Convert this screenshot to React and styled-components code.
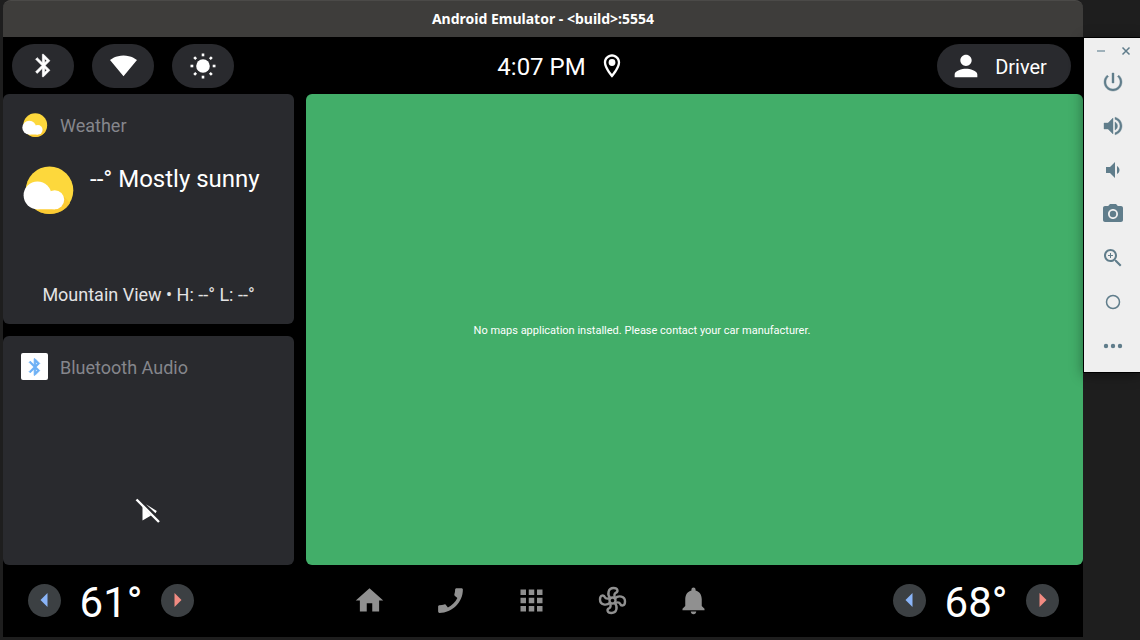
import React from 'react';
import styled, { createGlobalStyle } from 'styled-components';

const GlobalStyle = createGlobalStyle`
  *, *::before, *::after { box-sizing: border-box; }
  body { margin: 0; background: #1e1e1e; font-family: Roboto, "Liberation Sans", sans-serif; }
  h1, h2, p { margin: 0; font-weight: 400; }
  button { border: 0; padding: 0; font: inherit; color: inherit; cursor: pointer; }
  svg { display: block; flex: none; }
`;

const Desktop = styled.div`
  display: flex;
  align-items: flex-start;
  min-height: 100vh;
  padding: 0 0 3px 3px;
  background: #1e1e1e;
`;

const EmulatorWindow = styled.section`
  flex: 1;
  min-width: 0;
  min-height: calc(100vh - 3px);
  display: flex;
  flex-direction: column;
`;

const TitleBar = styled.header`
  height: 37px;
  display: flex;
  align-items: center;
  justify-content: center;
  background: #3e3d3b;
  border-top: 1px solid #4b4a48;
  border-radius: 8px 8px 0 0;
  color: #fff;
`;

const WindowTitle = styled.h1`
  font-family: "Noto Sans", "Open Sans", sans-serif;
  font-size: 14px;
  font-weight: 700;
  line-height: 20px;
`;

const Screen = styled.main`
  flex: 1;
  display: flex;
  flex-direction: column;
  background: #000;
  color: #fff;
`;

const StatusBar = styled.div`
  display: grid;
  grid-template-columns: 1fr auto 1fr;
  align-items: center;
  height: 57px;
  padding: 0 12px 0 9px;
`;

const QuickControls = styled.div`
  display: flex;
  gap: 18px;
`;

const Pill = styled.button`
  display: flex;
  align-items: center;
  justify-content: center;
  width: ${(p) => (p.$wide ? '134px' : '62px')};
  height: 44px;
  padding-right: ${(p) => (p.$wide ? '12px' : '0')};
  gap: 12px;
  border-radius: 22px;
  background: #292a2e;
  justify-self: end;
  font-size: 20px;
  line-height: 24px;
`;

const StatusLabel = styled.span`
  padding-top: 2px;
`;

const Clock = styled.div`
  display: flex;
  align-items: center;
  gap: 12px;
  padding-left: 40px;
  font-size: 24px;
  line-height: 28px;
`;

const Dashboard = styled.div`
  flex: 1;
  display: grid;
  grid-template-columns: 291px 1fr;
  gap: 12px;
`;

const CardColumn = styled.div`
  display: grid;
  grid-template-rows: 1fr 1fr;
  gap: 12px;
`;

const Card = styled.section`
  display: flex;
  flex-direction: column;
  padding: 17px 18px;
  border-radius: 6px;
  background: #292a2e;
`;

const CardHeader = styled.div`
  display: flex;
  align-items: center;
  gap: 12px;
  height: 28px;
`;

const CardTitle = styled.h2`
  padding-top: 2px;
  font-size: 18px;
  line-height: 28px;
  color: #85868c;
`;

const AppBadge = styled.span`
  display: flex;
  align-items: center;
  justify-content: center;
  width: 27px;
  height: 27px;
  border-radius: 2px;
  background: #fff;
`;

const Forecast = styled.div`
  display: flex;
  gap: 15px;
  padding-top: 25px;
`;

const Condition = styled.p`
  font-size: 24px;
  line-height: 30px;
`;

const Location = styled.p`
  margin-top: auto;
  text-align: center;
  font-size: 18px;
  line-height: 24px;
  color: #e3e3e4;
`;

const PlaybackArea = styled.div`
  margin-top: auto;
  display: flex;
  justify-content: center;
  padding: 0 2px 24px 0;
`;

const MapPanel = styled.section`
  display: flex;
  align-items: center;
  justify-content: center;
  padding: 2px 105px 0 0;
  border-radius: 6px;
  background: #42ae69;
  font-size: 11px;
  line-height: 16px;
`;

const BottomBar = styled.footer`
  display: flex;
  align-items: center;
  justify-content: space-between;
  height: 72px;
  padding: 0 24px 2px 25px;
`;

const Climate = styled.div`
  display: flex;
  align-items: center;
`;

const Step = styled.button`
  display: flex;
  align-items: center;
  justify-content: center;
  width: 33px;
  height: 33px;
  border-radius: 50%;
  background: #3c4043;
`;

const Temperature = styled.span`
  width: 100px;
  padding-top: 5px;
  text-align: center;
  font-size: 42px;
  line-height: 48px;
`;

const Nav = styled.nav`
  display: flex;
  gap: 48px;
  padding-right: 24px;
`;

const NavButton = styled.button`
  background: none;
  color: #909090;
`;

const Toolbar = styled.aside`
  position: relative;
  width: 57px;
  height: 336px;
  margin-top: 37px;
  border: solid #000;
  border-width: 1px 0 1px 1px;
  background: #efefef;
  color: #607d8b;
  box-shadow: 0 2px 12px rgba(0, 0, 0, 0.4);
`;

const WindowControls = styled.div`
  display: flex;
  justify-content: center;
  gap: 13px;
  padding: 7px 0 0 2px;
`;

const ToolList = styled.div`
  display: flex;
  flex-direction: column;
  align-items: center;
  gap: 20px;
  padding: 13px 0 0 1px;
`;

const ToolButton = styled.button`
  background: none;
`;

const PATHS = {
  bluetooth: 'M17.71 7.71L12 2h-1v7.59L6.41 5 5 6.41 10.59 12 5 17.59 6.41 19 11 14.41V22h1l5.71-5.71-4.3-4.29 4.3-4.29zM13 5.83l1.88 1.88L13 9.59V5.83zm1.88 10.46L13 18.17v-3.76l1.88 1.88z',
  wifi: 'M12 21.5L24 7C23.5 6.700 19 3 12 3S.5 6.700 0 7z',
  person: 'M12 12c2.210 0 4-1.790 4-4s-1.790-4-4-4-4 1.790-4 4 1.790 4 4 4zm0 2c-2.670 0-8 1.340-8 4v2h16v-2c0-2.660-5.330-4-8-4z',
  home: 'M10 20v-6h4v6h5v-8h3L12 3 2 12h3v8z',
  phone: 'M3.990 15.380c1.230 0 2.420-.2 3.530-.560.350-.120.740-.030 1.020.240l1.570 1.970c2.830-1.350 5.480-3.900 6.890-6.830l-1.950-1.660c-.270-.280-.350-.670-.240-1.020.370-1.110.560-2.300.560-3.530 0-.540.450-.990.990-.990h3.450c.540 0 1.190.240 1.190.990C21 13.280 13.270 21 3.990 21c-.710 0-.990-.630-.990-1.180v-3.450c0-.540.450-.990.990-.990z',
  apps: 'M4 4h4v4H4zM10 4h4v4h-4zM16 4h4v4h-4zM4 10h4v4H4zM10 10h4v4h-4zM16 10h4v4h-4zM4 16h4v4H4zM10 16h4v4h-4zM16 16h4v4h-4z',
  bell: 'M12 22c1.100 0 2-.900 2-2h-4c0 1.100.900 2 2 2zm6-6v-5c0-3.070-1.630-5.640-4.500-6.320V4c0-.830-.670-1.500-1.500-1.500s-1.500.670-1.500 1.500v.680C7.640 5.360 6 7.920 6 11v5l-2 2v1h16v-1z',
  power: 'M13 3h-2v10h2V3zm4.830 2.170l-1.420 1.420C17.990 7.860 19 9.810 19 12c0 3.870-3.130 7-7 7s-7-3.130-7-7c0-2.190 1.010-4.140 2.580-5.420L6.170 5.170C4.230 6.820 3 9.260 3 12c0 4.970 4.030 9 9 9s9-4.030 9-9c0-2.740-1.230-5.180-3.170-6.830z',
  volumeUp: 'M3 9v6h4l5 5V4L7 9H3zm13.500 3c0-1.770-1.020-3.290-2.500-4.030v8.050c1.480-.730 2.500-2.250 2.500-4.020zM14 3.230v2.060c2.890.860 5 3.540 5 6.710s-2.110 5.850-5 6.710v2.060c4.010-.910 7-4.490 7-8.770s-2.990-7.860-7-8.770z',
  volumeDown: 'M18.500 12c0-1.770-1.020-3.290-2.500-4.030v8.050c1.480-.730 2.500-2.250 2.500-4.020zM5 9v6h4l5 5V4L9 9H5z',
  camera: 'M9 2L7.170 4H4c-1.100 0-2 .900-2 2v12c0 1.100.900 2 2 2h16c1.100 0 2-.900 2-2V6c0-1.100-.900-2-2-2h-3.170L15 2H9zm3 15c-2.760 0-5-2.240-5-5s2.240-5 5-5 5 2.240 5 5-2.240 5-5 5zm0-1.800a3.200 3.200 0 1 0 0-6.400 3.200 3.200 0 0 0 0 6.400z',
  zoom: 'M15.500 14h-.790l-.280-.270C15.410 12.590 16 11.110 16 9.500 16 5.910 13.090 3 9.500 3S3 5.910 3 9.500 5.910 16 9.500 16c1.610 0 3.090-.590 4.230-1.570l.270.280v.790l5 4.990L20.490 19l-4.990-5zm-6 0C7.010 14 5 11.990 5 9.500S7.010 5 9.500 5 14 7.010 14 9.500 11.990 14 9.500 14zM10 7H9v2H7v1h2v2h1v-2h2V9h-2z',
  more: 'M5 9.800a2.200 2.200 0 1 0 0 4.400 2.200 2.200 0 0 0 0-4.400zM12 9.800a2.200 2.200 0 1 0 0 4.400 2.200 2.200 0 0 0 0-4.400zM19 9.800a2.200 2.200 0 1 0 0 4.400 2.200 2.200 0 0 0 0-4.400z',
};

function Icon({ name, size, color = 'currentColor', weight = 0 }) {
  return (
    <svg
      width={size}
      height={size}
      viewBox="0 0 24 24"
      fill={color}
      stroke={weight ? color : 'none'}
      strokeWidth={weight}
      aria-hidden="true"
    >
      <path d={PATHS[name]} fillRule={name === 'camera' ? 'evenodd' : 'nonzero'} />
    </svg>
  );
}

function SunIcon() {
  return (
    <svg width="26" height="26" viewBox="0 0 26 26" aria-hidden="true">
      <circle cx="13" cy="13" r="6.800" fill="#fff" />
      <g stroke="#fff" strokeWidth="2.600">
        {[0, 45, 90, 135, 180, 225, 270, 315].map((a) => (
          <path key={a} d="M13 .500v2.800" transform={`rotate(${a} 13 13)`} />
        ))}
      </g>
    </svg>
  );
}

function PinIcon() {
  return (
    <svg width="28" height="28" viewBox="0 0 24 24" fill="#fff" aria-hidden="true">
      <path d="M12 2C8.130 2 5 5.130 5 9c0 5.250 7 13 7 13s7-7.750 7-13c0-3.870-3.130-7-7-7zM7 9c0-2.760 2.240-5 5-5s5 2.240 5 5c0 2.880-2.880 7.190-5 9.880C9.920 16.210 7 11.850 7 9z" />
      <circle cx="12" cy="9" r="2.900" />
    </svg>
  );
}

function WeatherIcon({ size }) {
  return (
    <svg width={size} height={size} viewBox="0 0 54 54" aria-hidden="true">
      <circle cx="28.500" cy="26.300" r="23.800" fill="#fdd83c" />
      <path d="M15 45.200C19 49 24 50 29 50 37 50 45 46 49 39L42 31.500 34 45z" fill="#fbc831" opacity=".8" />
      <g fill="#fff">
        <circle cx="16.500" cy="31.300" r="13.900" />
        <circle cx="33.700" cy="35.700" r="9.500" />
        <path d="M16 31h12l6 5v9.200H16z" />
      </g>
    </svg>
  );
}

function FanIcon() {
  return (
    <svg width="33" height="33" viewBox="-16.500 -16.500 33 33" fill="none" stroke="currentColor" strokeWidth="2.400" aria-hidden="true">
      <circle r="3" />
      {[0, 90, 180, 270].map((a) => (
        <path
          key={a}
          d="M-2.200-2.500C-5.500-6-4.500-12.500 1-12.500 5.800-12.500 5.800-8.600 3.200-7.600 1.400-6.800 1.600-5 2.500-2.200"
          transform={`rotate(${a})`}
        />
      ))}
    </svg>
  );
}

function MutedIcon() {
  return (
    <svg width="26" height="26" viewBox="0 0 26 26" aria-hidden="true">
      <path d="M7.500 8.500V22.500L16 17.500zM11 6.300L21.800 13 20.500 15.200z" fill="#fff" />
      <path d="M1.500 1.500L24 24" stroke="#fff" strokeWidth="2.400" />
    </svg>
  );
}

function ClimateControl({ side, value }) {
  return (
    <Climate>
      <Step aria-label={`${side} cooler`}>
        <svg width="9" height="14" viewBox="0 0 9 14" aria-hidden="true"><path d="M7.500 0v14L.500 7z" fill="#8ab4f8" /></svg>
      </Step>
      <Temperature>{value}</Temperature>
      <Step aria-label={`${side} warmer`}>
        <svg width="9" height="14" viewBox="0 0 9 14" aria-hidden="true"><path d="M1.500 0v14L8.500 7z" fill="#f28b82" /></svg>
      </Step>
    </Climate>
  );
}

export default function App() {
  return (
    <Desktop>
      <GlobalStyle />
      <EmulatorWindow>
        <TitleBar>
          <WindowTitle>Android Emulator - &lt;build&gt;:5554</WindowTitle>
        </TitleBar>
        <Screen>
          <StatusBar>
            <QuickControls>
              <Pill aria-label="Bluetooth"><Icon name="bluetooth" size={27} color="#fff" weight={0.6} /></Pill>
              <Pill aria-label="Wi-Fi"><Icon name="wifi" size={27} color="#fff" /></Pill>
              <Pill aria-label="Brightness"><SunIcon /></Pill>
            </QuickControls>
            <Clock><StatusLabel>4:07 PM</StatusLabel><PinIcon /></Clock>
            <Pill $wide><Icon name="person" size={34} color="#fff" /><StatusLabel>Driver</StatusLabel></Pill>
          </StatusBar>
          <Dashboard>
            <CardColumn>
              <Card>
                <CardHeader>
                  <WeatherIcon size={27} />
                  <CardTitle>Weather</CardTitle>
                </CardHeader>
                <Forecast>
                  <WeatherIcon size={54} />
                  <Condition>--° Mostly sunny</Condition>
                </Forecast>
                <Location>Mountain View • H: --° L: --°</Location>
              </Card>
              <Card>
                <CardHeader>
                  <AppBadge><Icon name="bluetooth" size={20} color="#6cb0f5" weight={1} /></AppBadge>
                  <CardTitle>Bluetooth Audio</CardTitle>
                </CardHeader>
                <PlaybackArea><MutedIcon /></PlaybackArea>
              </Card>
            </CardColumn>
            <MapPanel>
              <p>No maps application installed. Please contact your car manufacturer.</p>
            </MapPanel>
          </Dashboard>
          <BottomBar>
            <ClimateControl side="Driver" value="61°" />
            <Nav>
              <NavButton aria-label="Home"><Icon name="home" size={33} /></NavButton>
              <NavButton aria-label="Phone"><Icon name="phone" size={33} /></NavButton>
              <NavButton aria-label="Apps"><Icon name="apps" size={33} /></NavButton>
              <NavButton aria-label="Climate"><FanIcon /></NavButton>
              <NavButton aria-label="Notifications"><Icon name="bell" size={33} /></NavButton>
            </Nav>
            <ClimateControl side="Passenger" value="68°" />
          </BottomBar>
        </Screen>
      </EmulatorWindow>
      <Toolbar>
        <WindowControls>
          <ToolButton aria-label="Minimize">
            <svg width="12" height="12" viewBox="0 0 12 12" stroke="#9fb1ba" strokeWidth="2"><path d="M2 6h8" /></svg>
          </ToolButton>
          <ToolButton aria-label="Close">
            <svg width="12" height="12" viewBox="0 0 12 12" stroke="currentColor" strokeWidth="1.500"><path d="M2.500 2.500l7 7M9.500 2.500l-7 7" /></svg>
          </ToolButton>
        </WindowControls>
        <ToolList>
          <ToolButton aria-label="Power"><Icon name="power" size={24} weight={0.4} /></ToolButton>
          <ToolButton aria-label="Volume up"><Icon name="volumeUp" size={24} weight={0.4} /></ToolButton>
          <ToolButton aria-label="Volume down"><Icon name="volumeDown" size={24} /></ToolButton>
          <ToolButton aria-label="Take screenshot"><Icon name="camera" size={24} /></ToolButton>
          <ToolButton aria-label="Zoom"><Icon name="zoom" size={24} /></ToolButton>
          <ToolButton aria-label="Overview">
            <svg width="24" height="24" viewBox="0 0 24 24" fill="none" stroke="currentColor" strokeWidth="1.500"><circle cx="12" cy="12" r="6.500" /></svg>
          </ToolButton>
          <ToolButton aria-label="More"><Icon name="more" size={24} /></ToolButton>
        </ToolList>
      </Toolbar>
    </Desktop>
  );
}
